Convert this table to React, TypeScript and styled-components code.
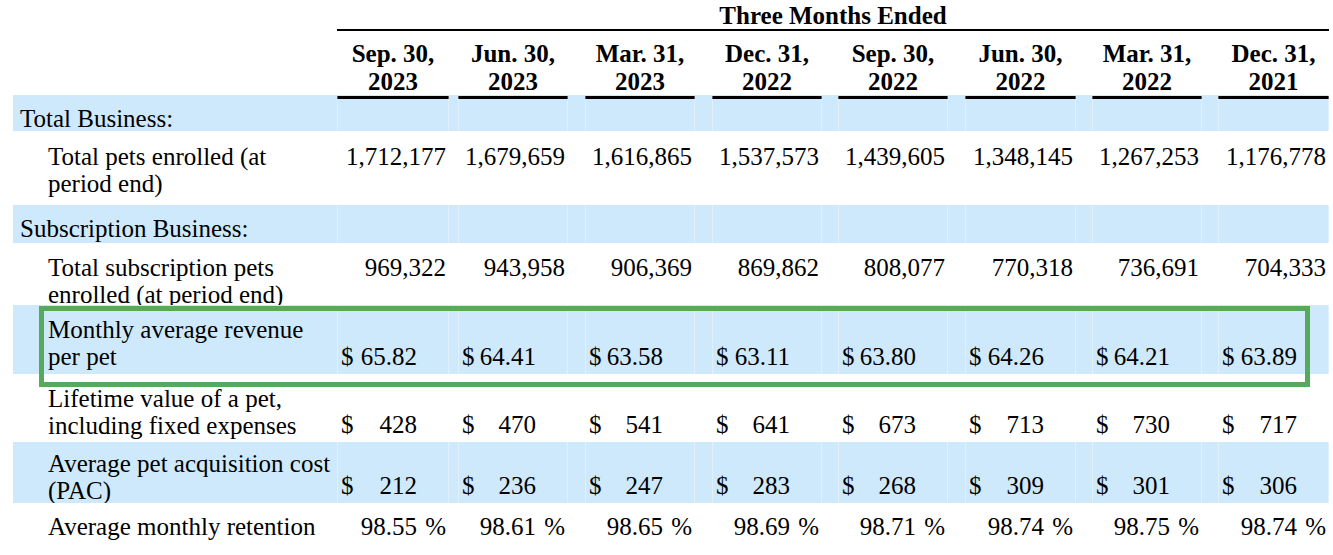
import React from "react";
import styled, { createGlobalStyle } from "styled-components";

const GlobalStyle = createGlobalStyle`
  html, body {
    margin: 0;
    padding: 0;
    background: #ffffff;
  }
  body {
    font-family: "Liberation Serif", "Times New Roman", serif;
    color: #000000;
    overflow: hidden;
  }
`;

const COLS =
  "324px 112px 9px 110px 17px 110px 17px 110px 16px 110px 17px 111px 16px 110px 16px 111px";

const Page = styled.div`
  position: relative;
  width: 1316px;
  height: 555px;
  margin-left: 13px;
  font-size: 25px;
  line-height: 27px;
`;

const TitleRow = styled.div`
  display: grid;
  grid-template-columns: ${COLS};
  height: 30px;
`;

const Title = styled.div`
  grid-column: 2 / -1;
  box-sizing: border-box;
  padding-top: 2px;
  border-bottom: 2px solid #000;
  font-weight: bold;
  text-align: center;
  white-space: nowrap;
`;

const DateRow = styled.div`
  display: grid;
  grid-template-columns: ${COLS};
  height: 65px;
`;

const DateHead = styled.div<{ $col: number }>`
  grid-column: ${(p) => 2 + 2 * p.$col};
  box-sizing: border-box;
  padding-top: 10px;
  border-bottom: 3px solid #000;
  font-weight: bold;
  line-height: 28px;
  text-align: center;
  white-space: nowrap;
`;

const Row = styled.div<{ $h: number; $shaded?: boolean }>`
  display: grid;
  grid-template-columns: ${COLS};
  height: ${(p) => p.$h}px;
  overflow: hidden;
  background: ${(p) => (p.$shaded ? "#cfe9fc" : "#ffffff")};
`;

const Label = styled.div<{ $pt: number; $section?: boolean }>`
  grid-column: 1;
  padding-top: ${(p) => p.$pt}px;
  padding-left: ${(p) => (p.$section ? 7 : 35)}px;
  white-space: nowrap;
`;

const Value = styled.div<{ $col: number; $pt: number; $shaded?: boolean }>`
  grid-column: ${(p) => 2 + 2 * p.$col};
  display: flex;
  padding: ${(p) => p.$pt}px 3px 0 4px;
  white-space: nowrap;
  box-shadow: ${(p) =>
    p.$shaded
      ? "inset 1px 0 0 rgba(255,255,255,0.35), inset -1px 0 0 rgba(255,255,255,0.35)"
      : "none"};
`;

const Dollar = styled.span`
  flex: none;
`;

const Amount = styled.span`
  flex: 1;
  text-align: right;
`;

const Suffix = styled.span<{ $w: number }>`
  flex: none;
  width: ${(p) => p.$w}px;
  text-align: right;
`;

const Highlight = styled.div`
  position: absolute;
  left: 26px;
  top: 306px;
  width: 1271px;
  height: 81px;
  box-sizing: border-box;
  border: 5px solid #57a95b;
  pointer-events: none;
`;

type Kind = "plain" | "dollar" | "percent";

interface RowDef {
  label: string[];
  section?: boolean;
  shaded?: boolean;
  h: number;
  labelPt: number;
  valuePt?: number;
  kind?: Kind;
  values?: string[];
}

const dates: [string, string][] = [
  ["Sep. 30,", "2023"],
  ["Jun. 30,", "2023"],
  ["Mar. 31,", "2023"],
  ["Dec. 31,", "2022"],
  ["Sep. 30,", "2022"],
  ["Jun. 30,", "2022"],
  ["Mar. 31,", "2022"],
  ["Dec. 31,", "2021"],
];

const EMPTY = ["", "", "", "", "", "", "", ""];

const rows: RowDef[] = [
  { label: ["Total Business:"], section: true, shaded: true, h: 36, labelPt: 10, values: EMPTY },
  {
    label: ["Total pets enrolled (at", "period end)"],
    h: 74,
    labelPt: 12,
    valuePt: 12,
    kind: "plain",
    values: ["1,712,177", "1,679,659", "1,616,865", "1,537,573", "1,439,605", "1,348,145", "1,267,253", "1,176,778"],
  },
  { label: ["Subscription Business:"], section: true, shaded: true, h: 38, labelPt: 10, values: EMPTY },
  {
    label: ["Total subscription pets", "enrolled (at period end)"],
    h: 62,
    labelPt: 11,
    valuePt: 11,
    kind: "plain",
    values: ["969,322", "943,958", "906,369", "869,862", "808,077", "770,318", "736,691", "704,333"],
  },
  {
    label: ["Monthly average revenue", "per pet"],
    shaded: true,
    h: 69,
    labelPt: 11,
    valuePt: 38,
    kind: "dollar",
    values: ["65.82", "64.41", "63.58", "63.11", "63.80", "64.26", "64.21", "63.89"],
  },
  {
    label: ["Lifetime value of a pet,", "including fixed expenses"],
    h: 68,
    labelPt: 11,
    valuePt: 37,
    kind: "dollar",
    values: ["428", "470", "541", "641", "673", "713", "730", "717"],
  },
  {
    label: ["Average pet acquisition cost", "(PAC)"],
    shaded: true,
    h: 61,
    labelPt: 8,
    valuePt: 30,
    kind: "dollar",
    values: ["212", "236", "247", "283", "268", "309", "301", "306"],
  },
  {
    label: ["Average monthly retention"],
    h: 52,
    labelPt: 10,
    valuePt: 10,
    kind: "percent",
    values: ["98.55", "98.61", "98.65", "98.69", "98.71", "98.74", "98.75", "98.74"],
  },
];

export default function App() {
  return (
    <>
      <GlobalStyle />
      <Page>
        <TitleRow>
          <Title>Three Months Ended</Title>
        </TitleRow>
        <DateRow>
          {dates.map(([a, b], i) => (
            <DateHead key={i} $col={i}>
              {a}
              <br />
              {b}
            </DateHead>
          ))}
        </DateRow>
        {rows.map((r, ri) => (
          <Row key={ri} $h={r.h} $shaded={r.shaded}>
            <Label $pt={r.labelPt} $section={r.section}>
              {r.label.map((l, li) => (
                <React.Fragment key={li}>
                  {li > 0 && <br />}
                  {l}
                </React.Fragment>
              ))}
            </Label>
            {r.values?.map((v, i) => (
              <Value key={i} $col={i} $pt={r.valuePt ?? 0} $shaded={r.shaded}>
                {r.kind === "dollar" && <Dollar>$</Dollar>}
                <Amount>{v}</Amount>
                <Suffix $w={r.kind === "plain" || !r.kind ? 0 : 29}>
                  {r.kind === "percent" ? "%" : ""}
                </Suffix>
              </Value>
            ))}
          </Row>
        ))}
        <Highlight />
      </Page>
    </>
  );
}
